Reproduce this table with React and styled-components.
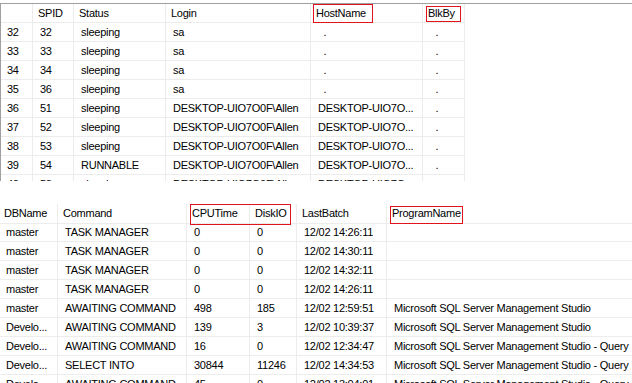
import React from "react";
import styled, { createGlobalStyle } from "styled-components";

const Global = createGlobalStyle`
  html, body { margin: 0; padding: 0; background: #fff; }
  body { width: 632px; height: 383px; overflow: hidden; }
`;

const Page = styled.div`
  width: 632px;
  height: 383px;
  overflow: hidden;
  font-family: "Liberation Sans", Arial, sans-serif;
  font-size: 11px;
  letter-spacing: -0.25px;
  color: #000;
  display: flex;
  flex-direction: column;
`;

const TopPane = styled.div`
  position: relative;
  margin-top: 3px;
  height: 177px;
  border-top: 1px solid #a0a0a0;
  border-left: 1px solid #a0a0a0;
  overflow: hidden;
  flex: none;
`;

const BottomPane = styled.div`
  position: relative;
  margin-top: 23px;
  flex: 1;
  overflow: hidden;
`;

const Grid = styled.div`
  display: grid;
  grid-template-columns: ${(p) => p.$cols};
  grid-auto-rows: 19px;
  justify-content: start;
  margin-left: ${(p) => p.$shift || 0}px;
  width: ${(p) => (p.$full ? "calc(100% + 1px)" : "auto")};
`;

const Cell = styled.div`
  box-sizing: border-box;
  border-right: ${(p) => (p.$last ? "none" : "1px solid #ececec")};
  border-bottom: 1px solid #ececec;
  padding-left: ${(p) => (p.$num ? 6 : 7)}px;
  line-height: 18px;
  white-space: pre;
  overflow: hidden;
`;

const HeadCell = styled(Cell)`
  padding-left: ${(p) => (p.$num ? 6 : 5)}px;
  height: ${(p) => p.$h || 19}px;
  line-height: ${(p) => (p.$h || 19) - 1}px;
`;

const Mark = styled.div`
  position: absolute;
  box-sizing: border-box;
  border: 1px solid #e3131d;
  pointer-events: none;
`;

const topCols = "32px 41px 92px 145px 112px 42px";
const topHead = ["", "SPID", "Status", "Login", "HostName", "BlkBy"];
const host = "DESKTOP-UIO7O0F\\Allen";
const hostShort = "DESKTOP-UIO7O...";
const topRows = [
  ["32", "32", "sleeping", "sa", "  .", "  ."],
  ["33", "33", "sleeping", "sa", "  .", "  ."],
  ["34", "34", "sleeping", "sa", "  .", "  ."],
  ["35", "36", "sleeping", "sa", "  .", "  ."],
  ["36", "51", "sleeping", host, hostShort, "  ."],
  ["37", "52", "sleeping", host, hostShort, "  ."],
  ["38", "53", "sleeping", host, hostShort, "  ."],
  ["39", "54", "RUNNABLE", host, hostShort, "  ."],
  ["40", "58", "sleeping", host, hostShort, "  ."],
];

const botCols = "59px 129px 63px 47px 90px 1fr";
const botHead = ["DBName", "Command", "CPUTime", "DiskIO", "LastBatch", "ProgramName"];
const ssms = "Microsoft SQL Server Management Studio";
const ssmsQ = "Microsoft SQL Server Management Studio - Query";
const botRows = [
  ["master", "TASK MANAGER", "0", "0", "12/02 14:26:11", ""],
  ["master", "TASK MANAGER", "0", "0", "12/02 14:30:11", ""],
  ["master", "TASK MANAGER", "0", "0", "12/02 14:32:11", ""],
  ["master", "TASK MANAGER", "0", "0", "12/02 14:26:11", ""],
  ["master", "AWAITING COMMAND", "498", "185", "12/02 12:59:51", ssms],
  ["Develo...", "AWAITING COMMAND", "139", "3", "12/02 10:39:37", ssms],
  ["Develo...", "AWAITING COMMAND", "16", "0", "12/02 12:34:47", ssmsQ],
  ["Develo...", "SELECT INTO", "30844", "11246", "12/02 14:34:53", ssmsQ],
  ["Develo...", "AWAITING COMMAND", "45", "0", "12/02 13:04:01", ssmsQ],
];

export default function App() {
  return (
    <Page>
      <Global />
      <TopPane>
        <Grid $cols={topCols}>
          {topHead.map((h, i) => (
            <HeadCell key={"h" + i} $num={i === 0}>{h}</HeadCell>
          ))}
          {topRows.map((r, ri) =>
            r.map((c, ci) => (
              <Cell key={ri + "-" + ci} $num={ci === 0}>{c}</Cell>
            ))
          )}
        </Grid>
        <Mark style={{ left: 312, top: 0, width: 60, height: 19 }} />
        <Mark style={{ left: 425, top: 2, width: 35, height: 16 }} />
      </TopPane>
      <BottomPane>
        <Grid $cols={botCols} $shift={-1} $full>
          {botHead.map((h, i) => (
            <HeadCell key={"bh" + i} $h={20} $last={i === 5}>{h}</HeadCell>
          ))}
          {botRows.map((r, ri) =>
            r.map((c, ci) => (
              <Cell key={ri + "-" + ci} $last={ci === 5}>{c}</Cell>
            ))
          )}
        </Grid>
        <Mark style={{ left: 190, top: 0, width: 101, height: 21 }} />
        <Mark style={{ left: 390, top: 2, width: 73, height: 18 }} />
      </BottomPane>
    </Page>
  );
}
